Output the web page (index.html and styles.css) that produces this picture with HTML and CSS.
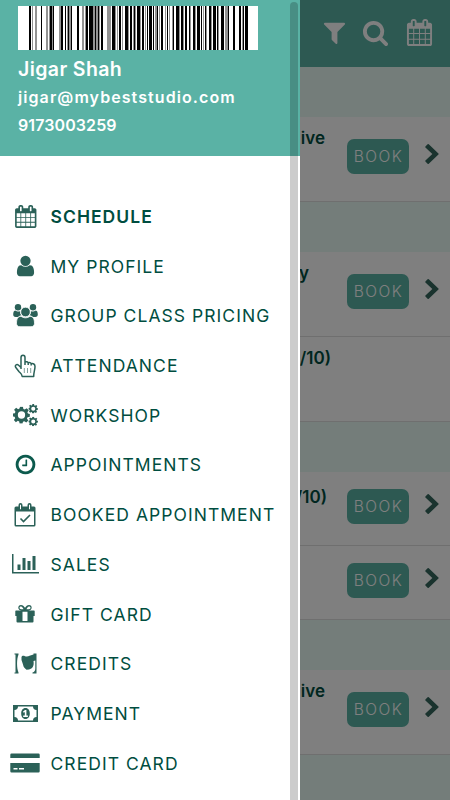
FILE: index.html
```html
<!DOCTYPE html>
<html lang="en">

<head>
    <meta charset="UTF-8">
    <meta name="viewport" content="width=device-width, initial-scale=1.0">
    <title>Schedule</title>
    <link rel="stylesheet" href="styles.css">
</head>

<body>

    <!-- Shared icons -->
    <svg class="sprite">
        <symbol id="calendar" viewBox="0 0 1792 1792"><path d="M192 1664h288v-288h-288v288zm352 0h320v-288h-320v288zm-352-352h288v-320h-288v320zm352 0h320v-320h-320v320zm-352-384h288v-288h-288v288zm736 736h320v-288h-320v288zm-384-736h320v-288h-320v288zm768 736h288v-288h-288v288zm-384-352h320v-320h-320v320zm-352-864v-288q0-13-9.5-22.5t-22.5-9.5h-64q-13 0-22.5 9.5t-9.5 22.5v288q0 13 9.5 22.5t22.5 9.5h64q13 0 22.5-9.5t9.5-22.5zm736 864h288v-320h-288v320zm-384-384h320v-288h-320v288zm384 0h288v-288h-288v288zm32-480v-288q0-13-9.5-22.5t-22.5-9.5h-64q-13 0-22.5 9.5t-9.5 22.5v288q0 13 9.5 22.5t22.5 9.5h64q13 0 22.5-9.5t9.5-22.5zm384-64v1280q0 52-38 90t-90 38h-1408q-52 0-90-38t-38-90v-1280q0-52 38-90t90-38h128v-96q0-66 47-113t113-47h64q66 0 113 47t47 113v96h384v-96q0-66 47-113t113-47h64q66 0 113 47t47 113v96h128q52 0 90 38t38 90z"/></symbol>
        <symbol id="chevron" viewBox="356 102 1026 1536"><path d="M1363 915l-742 704q-19 19-45 19t-45-19l-166-166q-19-19-19-45t19-45l531-493-531-493q-19-19-19-45t19-45l166-166q19-19 45-19t45 19l742 704q19 19 19 45t-19 45z"/></symbol>
        <symbol id="gear" viewBox="-10 -10 20 20"><path fill-rule="evenodd" d="M-1.7-9.8h3.4l.5 2.7 1.6.7 2.3-1.6 2.4 2.4-1.6 2.3.7 1.6 2.2.4v3.4l-2.7.5-.7 1.6 1.6 2.3-2.4 2.4-2.3-1.6-1.6.7-.5 2.2h-3.4l-.5-2.7-1.6-.7-2.3 1.6-2.4-2.4 1.6-2.3-.7-1.6-2.4-.4v-3.4l2.7-.5.7-1.6-1.6-2.3 2.4-2.4 2.3 1.6 1.6-.7zM0-4.300a4.300 4.300 0 1 0 0 8.600a4.300 4.300 0 1 0 0-8.600z"/></symbol>
    </svg>

    <div class="page">
        <header class="topbar">
            <svg width="27" height="27" viewBox="0 0 1792 1792"><path d="M1595 295q17 41-14 70l-493 493v742q0 42-39 59-13 5-25 5-27 0-45-19l-256-256q-19-19-19-45v-486l-493-493q-31-29-14-70 17-39 59-39h1280q42 0 59 39z"/></svg>
            <svg width="27" height="27" viewBox="0 0 1792 1792"><path d="M1216 832q0-185-131.500-316.500t-316.500-131.500-316.500 131.500-131.500 316.500 131.500 316.500 316.500 131.500 316.500-131.500 131.500-316.500zm512 832q0 52-38 90t-90 38q-54 0-90-38l-343-342q-179 124-399 124-143 0-273.500-55.500t-225-150-150-225-55.500-273.500 55.500-273.500 150-225 225-150 273.500-55.500 273.500 55.500 225 150 150 225 55.500 273.500q0 220-124 399l343 343q37 37 37 90z"/></svg>
            <svg class="topbar-calendar" width="27" height="27"><use href="#calendar"/></svg>
        </header>

        <div class="day"></div>
        <div class="class-row">
            <span class="class-title title-live">ive</span>
            <button class="book">BOOK</button>
            <svg class="arrow"><use href="#chevron"/></svg>
        </div>
        <div class="day"></div>
        <div class="class-row">
            <span class="class-title title-short">y</span>
            <button class="book">BOOK</button>
            <svg class="arrow"><use href="#chevron"/></svg>
        </div>
        <div class="class-row">
            <span class="class-title title-full">0/10)</span>
        </div>
        <div class="day"></div>
        <div class="class-row compact">
            <span class="class-title title-count">/10)</span>
            <button class="book">BOOK</button>
            <svg class="arrow"><use href="#chevron"/></svg>
        </div>
        <div class="class-row compact">
            <button class="book">BOOK</button>
            <svg class="arrow"><use href="#chevron"/></svg>
        </div>
        <div class="day"></div>
        <div class="class-row">
            <span class="class-title title-live">ive</span>
            <button class="book">BOOK</button>
            <svg class="arrow"><use href="#chevron"/></svg>
        </div>
        <div class="day"></div>
    </div>

    <div class="overlay"></div>

    <!-- Side menu -->
    <aside class="drawer">
        <div class="account">
            <svg class="barcode" viewBox="18 6 240 44" preserveAspectRatio="none" shape-rendering="crispEdges">
                <path class="bar-light" d="M32 6h1v44h-1zM35 6h2v44h-2zM46 6h2v44h-2zM49 6h1v44h-1zM52 6h2v44h-2zM59 6h2v44h-2zM67 6h1v44h-1zM69 6h3v44h-3zM82 6h2v44h-2zM85 6h1v44h-1zM93 6h5v44h-5zM99 6h1v44h-1zM107 6h4v44h-4zM115 6h1v44h-1zM117 6h1v44h-1zM122 6h1v44h-1zM128 6h1v44h-1zM133 6h3v44h-3zM140 6h1v44h-1zM145 6h1v44h-1zM155 6h2v44h-2zM159 6h1v44h-1zM165 6h1v44h-1zM169 6h1v44h-1zM172 6h1v44h-1zM179 6h1v44h-1zM183 6h1v44h-1zM190 6h1v44h-1zM195 6h1v44h-1zM203 6h1v44h-1zM206 6h1v44h-1zM211 6h1v44h-1zM218 6h1v44h-1zM225 6h4v44h-4zM242 6h1v44h-1z"/>
                <path d="M29 6h2v44h-2zM41 6h1v44h-1zM50 6h2v44h-2zM53 6h1v44h-1zM61 6h2v44h-2zM65 6h1v44h-1zM68 6h1v44h-1zM71 6h1v44h-1zM77 6h2v44h-2zM86 6h2v44h-2zM89 6h4v44h-4zM95 6h1v44h-1zM98 6h1v44h-1zM101 6h2v44h-2zM112 6h3v44h-3zM119 6h2v44h-2zM125 6h3v44h-3zM130 6h2v44h-2zM134 6h1v44h-1zM137 6h3v44h-3zM142 6h2v44h-2zM147 6h1v44h-1zM149 6h3v44h-3zM153 6h1v44h-1zM157 6h1v44h-1zM161 6h2v44h-2zM167 6h1v44h-1zM173 6h1v44h-1zM176 6h3v44h-3zM181 6h2v44h-2zM185 6h2v44h-2zM189 6h1v44h-1zM193 6h2v44h-2zM197 6h3v44h-3zM201 6h1v44h-1zM205 6h1v44h-1zM209 6h2v44h-2zM213 6h3v44h-3zM217 6h1v44h-1zM221 6h3v44h-3zM228 6h1v44h-1zM233 6h2v44h-2zM239 6h2v44h-2zM243 6h1v44h-1zM245 6h3v44h-3z"/>
            </svg>
            <div class="account-name">Jigar Shah</div>
            <div class="account-email">jigar@mybeststudio.com</div>
            <div class="account-phone">9173003259</div>
        </div>

        <nav class="menu">
            <a class="item active">
                <span class="icon"><svg width="23.5" height="23"><use href="#calendar"/></svg></span>
                <span class="label">SCHEDULE</span>
            </a>
            <a class="item">
                <span class="icon"><svg width="25" height="24" viewBox="0 0 1792 1792"><path d="M1536 1399q0 109-62.5 187t-150.5 78h-854q-88 0-150.5-78t-62.5-187q0-85 8.5-160.5t31.5-152 58.5-131 94-89 134.5-34.5q131 128 313 128t313-128q76 0 134.5 34.5t94 89 58.5 131 31.5 152 8.5 160.5zm-256-887q0 159-112.5 271.5t-271.5 112.5-271.5-112.5-112.5-271.5 112.5-271.5 271.5-112.5 271.5 112.5 112.5 271.5z"/></svg></span>
                <span class="label">MY PROFILE</span>
            </a>
            <a class="item">
                <span class="icon"><svg width="25" height="23" viewBox="0 0 25 23"><circle cx="5" cy="3.3" r="3.2"/><circle cx="20" cy="3.3" r="3.2"/><path d="M2.2 6.5c2 1.3 3.7 1 4.8.7 0 2 .6 3.3 1.5 4.4-1.3 0-2.4.5-3.3 1.4H2.700C1 13 .2 12 .2 10.600.2 8.800.7 6.500 2.200 6.500zM22.800 6.500c-2 1.300-3.700 1-4.800.7 0 2-.6 3.300-1.500 4.400 1.300 0 2.400.5 3.300 1.400h2.500c1.700 0 2.500-1 2.500-2.400 0-1.800-.5-4.100-2-4.100z"/><circle class="front" cx="12.500" cy="8" r="4.800"/><path class="front" d="M8 12.300c3 2 6 2 9 0 3.300 0 4.500 3.200 4.500 7 0 2.200-1.300 3.400-3.500 3.400H7c-2.200 0-3.500-1.200-3.500-3.400 0-3.800 1.200-7 4.500-7z"/></svg></span>
                <span class="label">GROUP CLASS PRICING</span>
            </a>
            <a class="item">
                <span class="icon"><svg class="line-icon" width="23" height="24" viewBox="0 0 23 24"><path d="M7 15V3.500c0-3 4-3 4 0V8c1.300-.7 2.700-.3 3.200.8 1.200-.6 2.500-.1 3 1 1.900-.6 3.800.3 3.800 2.600 0 3.500-1.300 5.300-1.300 10.100H8.200c0-2.300-2-3.500-3.300-5L2 13.700c-1.700-2.200.7-4.200 2.600-2.500L7 13.500M11 8v3M14.200 9v2M17.200 10v1.500"/><path class="thin" d="M10.300 14v5M13.500 14v5M16.700 14v5"/></svg></span>
                <span class="label">ATTENDANCE</span>
            </a>
            <a class="item">
                <span class="icon"><svg width="25" height="24" viewBox="0 0 25 24"><use href="#gear" x="0" y="3.500" width="17" height="17"/><use href="#gear" x="15.500" y="1" width="9.500" height="9.500"/><use href="#gear" x="15.500" y="13.700" width="9.500" height="9.500"/></svg></span>
                <span class="label">WORKSHOP</span>
            </a>
            <a class="item">
                <span class="icon clock"><svg width="23" height="23" viewBox="0 0 1792 1792"><path d="M1024 544v448q0 14-9 23t-23 9h-320q-14 0-23-9t-9-23v-64q0-14 9-23t23-9h224v-352q0-14 9-23t23-9h64q14 0 23 9t9 23zm416 352q0-148-73-273t-198-198-273-73-273 73-198 198-73 273 73 273 198 198 273 73 273-73 198-198 73-273zm224 0q0 209-103 385.5t-279.5 279.5-385.5 103-385.5-103-279.5-279.5-103-385.5 103-385.5 279.5-279.5 385.5-103 385.5 103 279.5 279.5 103 385.5z"/></svg></span>
                <span class="label">APPOINTMENTS</span>
            </a>
            <a class="item">
                <span class="icon"><svg width="22" height="24" viewBox="0 0 22 24"><path fill-rule="evenodd" d="M2 3.500h2.500V2a2 2 0 0 1 4 0v1.500h5V2a2 2 0 0 1 4 0v1.500H20q1.500 0 1.500 1.500v17q0 1.500-1.500 1.500H2Q.5 23.500.5 22V5Q.5 3.500 2 3.500zM2 8.500V22h18V8.500zM6 1.700v4.500h1V1.700zM15 1.700v4.500h1V1.700z"/><path class="check" d="M6.500 15.500l3 3 6.500-6.500"/></svg></span>
                <span class="label">BOOKED APPOINTMENT</span>
            </a>
            <a class="item">
                <span class="icon"><svg width="27" height="20" viewBox="0 0 27 20"><path d="M0 0h1.500v18H27v1.500H0zM5.500 10.500h3V16h-3zM10.500 4h3v12h-3zM15.500 7h3v9h-3zM20.500 2h3v14h-3z"/></svg></span>
                <span class="label">SALES</span>
            </a>
            <a class="item">
                <span class="icon"><svg width="20" height="18" viewBox="0 0 20 18"><path fill-rule="evenodd" d="M1 5.500h6C2 5.500 2.500 0 6 0c1.800 0 2.900 1.300 4 2.800C11.100 1.300 12.200 0 14 0c3.500 0 4 5.500-1 5.500h6q.7 0 .7.700V11h-1.200v5.500q0 1-1 1h-15q-1 0-1-1V11H.3V6.200q0-.7.700-.7zM6 1.600c-2 0-2 2.700 0 2.700h2.500C8 3.200 7.200 1.600 6 1.600zM14 1.600c-1.200 0-2 1.600-2.500 2.700H14c2 0 2-2.700 0-2.700zM7.500 6.800V16h5V6.800z"/></svg></span>
                <span class="label">GIFT CARD</span>
            </a>
            <a class="item">
                <span class="icon"><svg width="23" height="21" viewBox="0 0 23 21"><path d="M.5.500h4v1C2.600 6 2.600 15 4.500 19.500v1h-4v-1h1v-18h-1zM7.500 4c.5-1.500 2-1.500 3.500-.8s3.500.3 4.500-.4L19.500 1.500V.5h3v20h-4v-1c2-.5 2.800-2 2.800-4V7.500L19.500 8c.8 5-.8 7.500-4.500 8.500l-2.500.3C11 15.500 9.500 14.500 9 11.500L7.500 7z"/></svg></span>
                <span class="label">CREDITS</span>
            </a>
            <a class="item">
                <span class="icon"><svg width="25" height="17" viewBox="0 0 25 17"><path fill-rule="evenodd" d="M0 0h25v17H0zM5 1.500C5 3.600 3.700 5 1.500 5v7C3.700 12 5 13.400 5 15.500h15c0-2.100 1.300-3.500 3.500-3.500V5C21.300 5 20 3.600 20 1.500zM12.500 3c2.800 0 4.300 2.400 4.300 5.500S15.300 14 12.500 14s-4.300-2.400-4.300-5.500S9.700 3 12.500 3zM12 5L9.900 6.700l.9 1 1-.7v3.500h-1.600V12h4.700v-1.500h-1.500V5z"/></svg></span>
                <span class="label">PAYMENT</span>
            </a>
            <a class="item">
                <span class="icon"><svg width="30" height="20" viewBox="0 0 30 20"><path fill-rule="evenodd" d="M1.500.5h27q1.200 0 1.200 1.200V5H.3V1.700Q.3.500 1.500.500zM.3 10h29.400v8.300q0 1.200-1.200 1.200h-27q-1.200 0-1.200-1.200zM3.500 15v1.500h4V15zM9 15v1.500h5V15z"/></svg></span>
                <span class="label">CREDIT CARD</span>
            </a>
        </nav>

        <div class="scroll-thumb"></div>
    </aside>

</body>

</html>
```
FILE: styles.css
```css
* {
    box-sizing: border-box;
}

body {
    margin: 0;
    height: 800px;
    overflow: hidden;
    position: relative;
    background: #fff;
    color: #004d40;
    font-family: Inter, "Open Sans", sans-serif;
}

svg {
    display: block;
    flex: none;
    fill: currentColor;
}

.sprite {
    position: absolute;
    width: 0;
    height: 0;
}

/* Schedule page */
.page {
    height: 800px;
    overflow: hidden;
}

.topbar {
    display: flex;
    justify-content: flex-end;
    align-items: center;
    gap: 14px;
    height: 67px;
    padding: 0 17px 2px 0;
    background: #5ab2a5;
    color: #fff;
}

.topbar-calendar {
    margin: 0 0 1px 3px;
}

.day {
    height: 50px;
    background: #e8fbf5;
}

.class-row {
    display: flex;
    justify-content: flex-end;
    align-items: center;
    height: 85px;
    padding: 0 11px 5px 0;
    border-bottom: 1px solid #dedede;
}

.class-row.compact {
    height: 74px;
    padding-bottom: 4px;
}

.class-title {
    align-self: flex-start;
    margin-top: 11px;
    font-size: 17px;
    font-weight: 600;
    line-height: 20px;
    white-space: nowrap;
}

.title-live {
    margin-right: 22px;
}

.title-short {
    margin-right: 38px;
}

.title-full {
    margin-right: 108px;
}

.title-count {
    margin-right: 20px;
    margin-top: 15px;
}

.book {
    width: 62px;
    height: 35px;
    padding: 0 0 0 1px;
    border: none;
    border-radius: 7px;
    background: #5ab2a5;
    color: #fff;
    font-family: inherit;
    font-size: 15.5px;
    font-weight: 300;
    letter-spacing: 1.5px;
}

.arrow {
    width: 14px;
    height: 20px;
    margin: 0 0 6px 16px;
    color: #34665c;
}

.overlay {
    position: absolute;
    inset: 0;
    background: rgba(0, 0, 0, 0.5);
}

/* Side menu */
.drawer {
    position: absolute;
    top: 0;
    left: 0;
    width: 300px;
    height: 800px;
    overflow: hidden;
    background: #fff;
}

.account {
    height: 156px;
    padding: 6px 18px 0;
    background: #5ab2a5;
    color: #fff;
    font-weight: 600;
}

.barcode {
    width: 240px;
    height: 44px;
    background: #fff;
    fill: #000;
}

.bar-light {
    fill: #929292;
}

.account-name {
    margin-top: 5px;
    font-size: 19.5px;
    line-height: 28px;
    letter-spacing: 0.4px;
}

.account-email,
.account-phone {
    font-size: 16px;
    line-height: 28px;
}

.account-email {
    letter-spacing: 1.08px;
}

.account-phone {
    letter-spacing: 0.1px;
}

.menu {
    padding-top: 35.5px;
}

.item {
    display: flex;
    align-items: center;
    height: 49.73px;
    color: #004d40;
    font-size: 17.5px;
}

.item.active {
    font-weight: 600;
}

.icon {
    display: flex;
    justify-content: center;
    width: 50.5px;
    color: #2b6158;
}

.icon.clock {
    color: #0c5a4d;
}

.label {
    letter-spacing: 1.05px;
    white-space: nowrap;
}

.line-icon {
    fill: none;
    stroke: currentColor;
    stroke-width: 1.5;
    stroke-linejoin: round;
}

.front {
    stroke: #fff;
    stroke-width: 0.8;
}

.thin {
    stroke-width: 0.6;
}

.check {
    fill: none;
    stroke: currentColor;
    stroke-width: 1.6;
}

.scroll-thumb {
    position: absolute;
    top: 2px;
    right: 2px;
    width: 8px;
    height: 830px;
    border-radius: 4px;
    background: rgba(0, 0, 0, 0.2);
}
```
